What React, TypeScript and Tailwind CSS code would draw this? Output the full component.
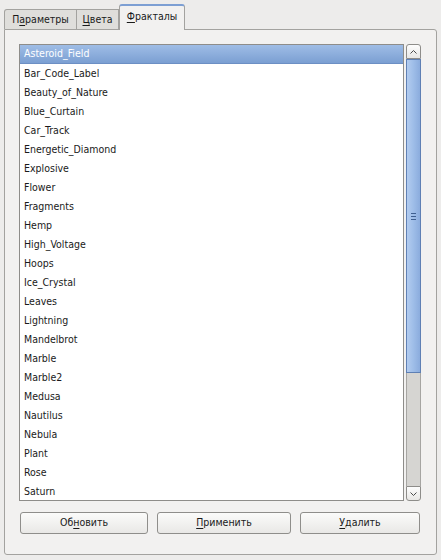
import React from "react";

const fractals = [
  "Asteroid_Field",
  "Bar_Code_Label",
  "Beauty_of_Nature",
  "Blue_Curtain",
  "Car_Track",
  "Energetic_Diamond",
  "Explosive",
  "Flower",
  "Fragments",
  "Hemp",
  "High_Voltage",
  "Hoops",
  "Ice_Crystal",
  "Leaves",
  "Lightning",
  "Mandelbrot",
  "Marble",
  "Marble2",
  "Medusa",
  "Nautilus",
  "Nebula",
  "Plant",
  "Rose",
  "Saturn",
];

function Mnemonic({ before = "", letter, after }: { before?: string; letter: string; after: string }) {
  return (
    <span>
      {before}
      <span className="underline underline-offset-2">{letter}</span>
      {after}
    </span>
  );
}

function Chevron({ up }: { up?: boolean }) {
  return (
    <svg width="7" height="4" viewBox="0 0 7 4" className="block">
      <path
        d={up ? "M0.5 3.5 L3.5 0.5 L6.5 3.5" : "M0.5 0.5 L3.5 3.5 L6.5 0.5"}
        fill="none"
        stroke="#4b4b4b"
        strokeWidth="1"
      />
    </svg>
  );
}

function Button({ width, children }: { width: string; children: React.ReactNode }) {
  return (
    <div
      className={`${width} h-[22px] flex items-center justify-center rounded-[3px] border border-[#8f8e8b] bg-gradient-to-b from-[#fbfbfa] to-[#e9e8e6] text-[#1a1a1a]`}
    >
      {children}
    </div>
  );
}

export default function App() {
  return (
    <div
      className="w-[441px] h-[560px] bg-[#edeceb] text-[#1a1a1a] text-[10.5px] overflow-hidden"
      style={{ fontFamily: '"DejaVu Sans Condensed", "DejaVu Sans", sans-serif' }}
    >
      {/* Tabs */}
      <div className="flex items-end pl-[4px] pt-[4px] h-[29px]">
        <div className="w-[73px] h-[20px] flex items-center justify-center border border-b-0 border-[#a3a29f] rounded-tl-[3px] bg-[#dfdedb]">
          <Mnemonic before="П" letter="а" after="раметры" />
        </div>
        <div className="w-[42px] h-[20px] flex items-center justify-center border border-b-0 border-l-0 border-[#a3a29f] bg-[#dfdedb]">
          <Mnemonic letter="Ц" after="вета" />
        </div>
        <div className="relative z-10 -mb-px w-[66px] h-[26px] pb-[2px] flex items-center justify-center rounded-t-[3px] border border-b-0 border-[#a3a29f] border-t-[#7d9fd3] border-t-2 bg-[#f2f1f0]">
          <Mnemonic letter="Ф" after="ракталы" />
        </div>
      </div>

      {/* Panel */}
      <div className="mx-[4px] h-[526px] border border-[#a3a29f] rounded-b-[3px] rounded-tr-[3px] bg-[#f2f1f0] pt-[14px] pl-[14px]">
        <div className="flex h-[457px]">
          {/* List */}
          <div className="w-[385px] h-full border border-[#8e8d8a] bg-white overflow-hidden">
            {fractals.map((name, i) => (
              <div
                key={name}
                className={
                  i === 0
                    ? "h-[19px] pl-[4px] flex items-center text-white bg-gradient-to-b from-[#9fbde6] to-[#7b9fd2] border-b border-[#6c8fc4]"
                    : "h-[19px] pl-[4px] flex items-center"
                }
              >
                {name}
              </div>
            ))}
          </div>

          {/* Scrollbar */}
          <div className="ml-[2px] w-[15px] h-full flex flex-col">
            <div className="h-[15px] flex items-center justify-center rounded-t-[3px] border border-[#8e8d8a] bg-gradient-to-b from-[#fdfdfd] to-[#e8e7e5]">
              <Chevron up />
            </div>
            <div className="h-[314px] flex items-center justify-center border border-[#5f80b4] bg-gradient-to-r from-[#b3ccef] via-[#9ebde8] to-[#8bacdd]">
              <div className="flex flex-col gap-[2px]">
                <div className="w-[5px] h-px bg-[#3f5f8f]" />
                <div className="w-[5px] h-px bg-[#3f5f8f]" />
                <div className="w-[5px] h-px bg-[#3f5f8f]" />
              </div>
            </div>
            <div className="flex-1 border-x border-[#a6a5a2] bg-[#d6d5d2]" />
            <div className="h-[15px] flex items-center justify-center rounded-b-[3px] border border-[#8e8d8a] bg-gradient-to-b from-[#fdfdfd] to-[#e8e7e5]">
              <Chevron />
            </div>
          </div>
        </div>

        {/* Buttons */}
        <div className="flex mt-[11px] pl-[1px] gap-[9px]">
          <Button width="w-[128px]">
            <Mnemonic before="Об" letter="н" after="овить" />
          </Button>
          <Button width="w-[134px]">
            <Mnemonic letter="П" after="рименить" />
          </Button>
          <Button width="w-[120px]">
            <Mnemonic letter="У" after="далить" />
          </Button>
        </div>
      </div>
    </div>
  );
}
